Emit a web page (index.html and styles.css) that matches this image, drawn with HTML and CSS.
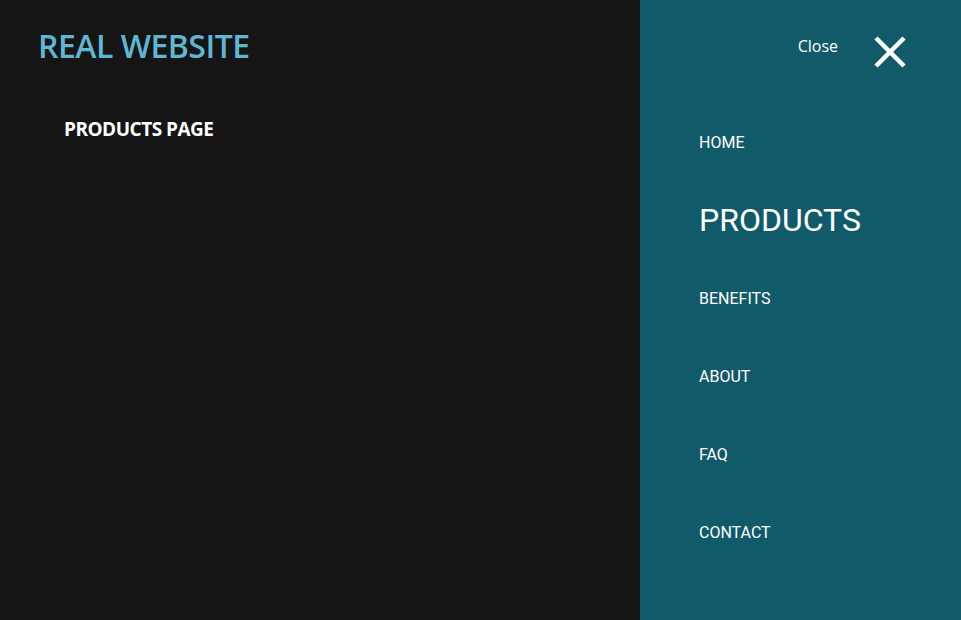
FILE: index.html
```html
<!DOCTYPE html>
<html lang="en">
<head>
<meta charset="utf-8">
<title>Real Website</title>
<link rel="stylesheet" href="styles.css">
</head>
<body>
<div class="page">
  <main class="main">
    <header class="header">
      <a class="logo" href="#">REAL WEBSITE</a>
    </header>
    <h1 class="page-title">PRODUCTS PAGE</h1>
  </main>
  <aside class="menu">
    <div class="menu-top">
      <span class="close-label">Close</span>
      <button class="close-btn" aria-label="Close">
        <svg width="32" height="32" viewBox="0 0 32 32"><path d="M2 2 L30 30 M30 2 L2 30" stroke="#fff" stroke-width="4.5" fill="none"/></svg>
      </button>
    </div>
    <nav class="nav">
      <a class="nav-item" href="#">HOME</a>
      <a class="nav-item active" href="#">PRODUCTS</a>
      <a class="nav-item" href="#">BENEFITS</a>
      <a class="nav-item" href="#">ABOUT</a>
      <a class="nav-item" href="#">FAQ</a>
      <a class="nav-item" href="#">CONTACT</a>
    </nav>
  </aside>
</div>
</body>
</html>
```
FILE: styles.css
```css
* { box-sizing: border-box; }
html, body { margin: 0; padding: 0; height: 100%; }
body {
  background: #151515;
  font-family: "Open Sans", "Liberation Sans", sans-serif;
  overflow: hidden;
}
.page {
  display: flex;
  height: 620px;
}
.main {
  flex: 1;
  background: #151515;
  padding: 24px 0 0 38px;
}
.logo {
  color: #5fb7d3;
  font-size: 32px;
  font-weight: 600;
  text-decoration: none;
  letter-spacing: -0.5px;
  line-height: 44px;
  display: inline-block;
}
.page-title {
  margin: 47px 0 0 26px;
  color: #fff;
  font-size: 19px;
  font-weight: 700;
  letter-spacing: -0.5px;
  line-height: 28px;
}
.menu {
  width: 321px;
  background: #115a69;
  display: flex;
  flex-direction: column;
}
.menu-top {
  display: flex;
  align-items: center;
  justify-content: flex-end;
  padding: 34px 55px 0 0;
  gap: 36px;
  height: 70px;
}
.close-label {
  color: #fff;
  font-size: 16px;
  margin-top: -12px;
}
.close-btn {
  background: none;
  border: 0;
  padding: 0;
  width: 32px;
  height: 32px;
  display: block;
}
.close-btn svg { display: block; }
.nav {
  display: flex;
  flex-direction: column;
  padding: 33px 0 0 59px;
}
.nav-item {
  font-family: Roboto, "Liberation Sans", sans-serif;
  color: #fff;
  text-decoration: none;
  font-size: 16px;
  height: 78px;
  display: flex;
  align-items: center;
}
.nav-item.active {
  font-size: 32px;
}
```
